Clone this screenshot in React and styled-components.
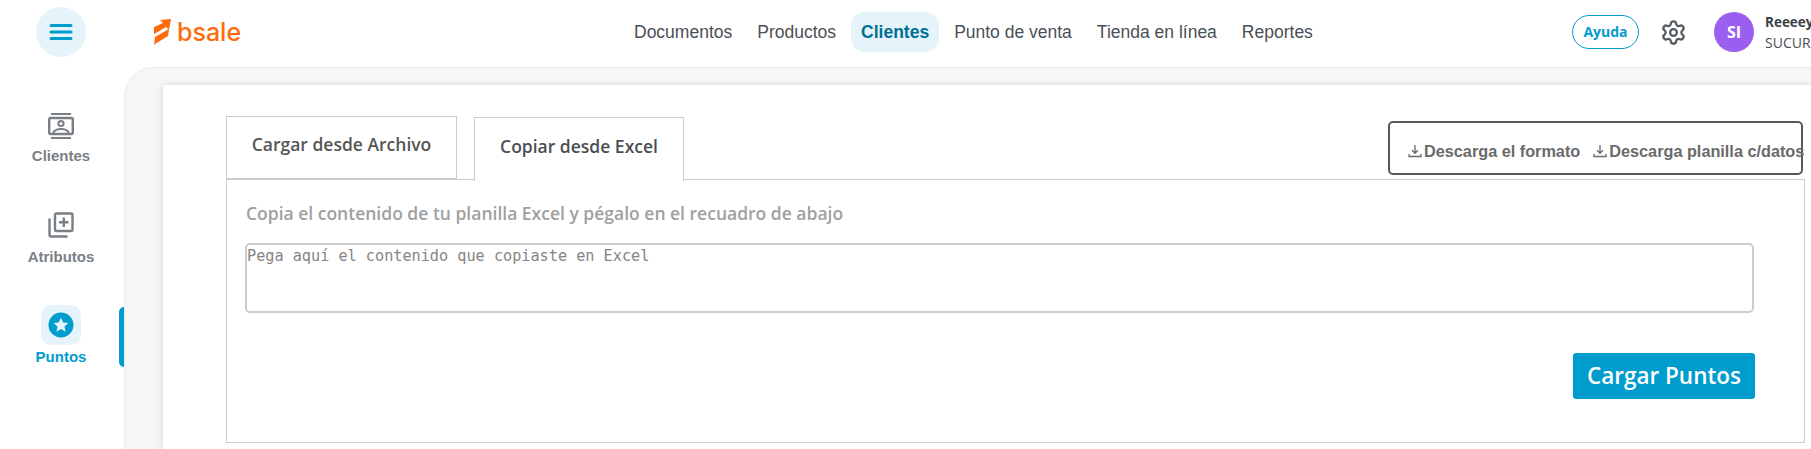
import React from 'react';
import styled, { createGlobalStyle } from 'styled-components';
import { Settings } from 'lucide-react';

const Global = createGlobalStyle`
  html, body { margin: 0; padding: 0; background: #fff; height: 100%; overflow: hidden; }
  * { box-sizing: border-box; }
`;
const Page = styled.div`width: 1811px; height: 449px; overflow: hidden; display: flex; flex-direction: column; background: #fff;`;
const Header = styled.header`height: 67px; flex: none; display: flex; align-items: center; background: #fff;`;
const Brand = styled.div`width: 624px; flex: none; display: flex; align-items: center; padding-left: 36px;`;
const MenuButton = styled.button`width: 50px; height: 50px; border: 0; padding: 0; border-radius: 50%; background: #e5f4fa; display: flex; align-items: center; justify-content: center; margin-top: -3px;`;
const Logo = styled.div`display: flex; align-items: center; margin-left: 67px; margin-top: -3px; gap: 4px;`;
const LogoText = styled.span`font: 500 25px/1 "Inter", sans-serif; color: #ff6b0a; letter-spacing: 0;`;
const Nav = styled.nav`display: flex; gap: 5px; margin-top: -3px;`;
const NavItem = styled.a`height: 40px; padding: 1px 10px 0; display: flex; align-items: center; border-radius: 14px; font: ${p => p.$active ? 700 : 400} 17.5px/1 "Liberation Sans", sans-serif; color: ${p => p.$active ? '#006f94' : '#4a4f55'}; background: ${p => p.$active ? '#e5f4fa' : 'transparent'};`;
const UserArea = styled.div`margin-left: auto; width: 239px; flex: none; display: flex; align-items: center; overflow: hidden; margin-top: -3px;`;
const HelpPill = styled.button`width: 67px; height: 34px; flex: none; padding: 0; background: #fff; border: 1px solid #009ccd; border-radius: 17px; color: #009ccd; font: 700 14px/1 "Open Sans", sans-serif;`;
const GearSlot = styled.div`display: flex; flex: none; margin-left: 21px; color: #565b60;`;
const Avatar = styled.div`width: 40px; height: 40px; flex: none; margin-left: 27px; border-radius: 50%; background: #9b5ff0; color: #fff; display: flex; align-items: center; justify-content: center; font: 700 16px/1 "Open Sans", sans-serif;`;
const UserText = styled.div`margin-left: 11px; flex: none; display: flex; flex-direction: column; gap: 3px; white-space: nowrap;`;
const UserName = styled.span`font: 700 13.5px/17px "Open Sans", sans-serif; color: #3a3f45;`;
const UserBranch = styled.span`font: 400 14px/17px "Open Sans", sans-serif; color: #4a4f55;`;

const Body = styled.div`flex: 1; display: flex; min-height: 0;`;
const Sidebar = styled.aside`width: 124px; flex: none; display: flex; flex-direction: column; padding-top: 45px; position: relative;`;
const SideItem = styled.div`height: ${p => p.$h}px; display: flex; flex-direction: column; align-items: center; gap: ${p => p.$gap}px; color: ${p => p.$active ? '#009ccd' : '#7a7f85'}; font: 700 15px/18px "Liberation Sans", sans-serif; width: 122px;`;
const IconTile = styled.div`width: 40px; height: 40px; border-radius: 10px; background: #e5f4fa; display: flex; align-items: center; justify-content: center;`;
const Indicator = styled.div`position: absolute; left: 119px; top: 240px; width: 5px; height: 60px; background: #009ccd; border-radius: 5px 0 0 5px;`;
const Shell = styled.main`flex: 1; min-width: 0; background: #f4f6f8; border-top: 1px solid #e8eaed; border-left: 1px solid #e8eaed; border-top-left-radius: 30px; padding: 17px 0 0 38px;`;
const Card = styled.section`height: 100%; background: #fff; box-shadow: 0 0 6px rgba(0,0,0,.14); padding: 31px 6px 0 63px;`;
const TabRow = styled.div`display: flex; align-items: flex-end; justify-content: space-between; padding-right: 2px;`;
const Tabs = styled.div`display: flex; gap: 17px; align-items: flex-start;`;
const Tab = styled.div`height: ${p => p.$active ? 64 : 63}px; width: ${p => p.$w}px; margin-top: ${p => p.$active ? 1 : 0}px; margin-bottom: ${p => p.$active ? -1 : 0}px; padding-bottom: 6px; position: relative; display: flex; align-items: center; justify-content: center; border: 1px solid #cccccc; border-bottom: ${p => p.$active ? '0' : '1px solid #ccc'}; background: #fff; font: 600 17.5px/1 "Open Sans", sans-serif; color: ${p => p.$active ? '#4a4f55' : '#555'}; z-index: 1;`;
const DownloadBox = styled.div`width: 415px; height: 54px; margin-bottom: 5px; padding: 18px 0 0 17px; border: 2px solid #55585c; border-radius: 5px; display: flex; gap: 12px; white-space: nowrap;`;
const DownloadLink = styled.a`display: flex; align-items: center; height: 20px; gap: 1px; color: #6a6a6a; font: 700 16.25px/1 "Liberation Sans", sans-serif;`;
const Panel = styled.div`height: 264px; margin-top: -1px; border: 1px solid #ccc; padding: 22px 50px 0 18px;`;
const Hint = styled.p`margin: 0 0 0 1px; font: 600 17.5px/22px "Open Sans", sans-serif; color: #a0a0a0;`;
const Paste = styled.textarea`display: block; width: 100%; height: 70px; margin-top: 19px; padding: 2px 0; border: 2px solid #ccc; border-radius: 5px; resize: none; outline: 0; font: 400 15.2px/18px "DejaVu Sans Mono", monospace; &::placeholder { color: #858585; opacity: 1; }`;
const Actions = styled.div`display: flex; justify-content: flex-end; margin-right: -1px; margin-top: 40px;`;
const Submit = styled.button`width: 182px; height: 46px; border: 0; padding: 0; background: #009ccd; border-radius: 3px; color: #fff; font: 600 22.5px/1 "Open Sans", sans-serif;`;

const DownloadIcon = () => (
  <svg width="16" height="16" viewBox="0 0 16 16" fill="none" stroke="#6a6a6a" strokeWidth="1.3">
    <path d="M8 2v8M5 7.3l3 3 3-3M2 11v2.5h12V11" />
  </svg>
);

export default function App() {
  return (
    <Page>
      <Global />
      <Header>
        <Brand>
          <MenuButton aria-label="Menú">
            <svg width="24" height="18" viewBox="0 0 24 18" stroke="#009ccd" strokeWidth="3" strokeLinecap="round">
              <path d="M2 2.5h20M2 9h20M2 15.500h20" />
            </svg>
          </MenuButton>
          <Logo>
            <svg width="20" height="28" viewBox="0 0 20 28" fill="#ff6b0a">
              <path d="M10 5 L7 2 L18 1 L16 12 L13 9 L3 15 L1 16 L1 9 Z" />
              <path d="M1 27 L2 19 L16 11 L15 18 L2 26 Z" />
            </svg>
            <LogoText>bsale</LogoText>
          </Logo>
        </Brand>
        <Nav>
          <NavItem>Documentos</NavItem>
          <NavItem>Productos</NavItem>
          <NavItem $active>Clientes</NavItem>
          <NavItem>Punto de venta</NavItem>
          <NavItem>Tienda en línea</NavItem>
          <NavItem>Reportes</NavItem>
        </Nav>
        <UserArea>
          <HelpPill>Ayuda</HelpPill>
          <GearSlot><Settings size={27} strokeWidth={2} /></GearSlot>
          <Avatar>SI</Avatar>
          <UserText>
            <UserName>Reeeeyes Ignacio</UserName>
            <UserBranch>SUCURSAL CENTRAL</UserBranch>
          </UserText>
        </UserArea>
      </Header>
      <Body>
        <Sidebar>
          <SideItem $h={100} $gap={7}>
            <svg width="28" height="28" viewBox="0 0 28 28" fill="none" stroke="#7a7f85" strokeWidth="2.400">
              <path d="M4 2h20M4 26h20" strokeWidth="2.200" />
              <rect x="2.200" y="6" width="23.600" height="16" rx="1.500" />
              <circle cx="14" cy="11.500" r="2.600" strokeWidth="2" />
              <path d="M6 21c1.500-3 5-4 8-4s6.500 1 8 4" strokeWidth="2" />
            </svg>
            Clientes
          </SideItem>
          <SideItem $h={93} $gap={10}>
            <svg width="26" height="26" viewBox="0 0 26 26" fill="none" stroke="#7a7f85" strokeWidth="2.400">
              <rect x="7" y="1.500" width="17.500" height="17.500" rx="1.500" />
              <path d="M15.800 5.500v9.500M11 10.200h9.500" />
              <path d="M1.500 6.500v16a2 2 0 0 0 2 2h16" />
            </svg>
            Atributos
          </SideItem>
          <SideItem $h={70} $gap={3} $active>
            <IconTile>
              <svg width="26" height="26" viewBox="0 0 26 26">
                <circle cx="13" cy="13" r="12.500" fill="#009ccd" />
                <path d="M13 5.800l2.200 4.700 5.100.6-3.800 3.500 1 5.100-4.500-2.600-4.500 2.600 1-5.100-3.800-3.500 5.100-.6z" fill="#e5f4fa" />
              </svg>
            </IconTile>
            Puntos
          </SideItem>
          <Indicator />
        </Sidebar>
        <Shell>
          <Card>
            <TabRow>
              <Tabs>
                <Tab $w={231}>Cargar desde Archivo</Tab>
                <Tab $w={210} $active>Copiar desde Excel</Tab>
              </Tabs>
              <DownloadBox>
                <DownloadLink><DownloadIcon />Descarga el formato</DownloadLink>
                <DownloadLink><DownloadIcon />Descarga planilla c/datos</DownloadLink>
              </DownloadBox>
            </TabRow>
            <Panel>
              <Hint>Copia el contenido de tu planilla Excel y pégalo en el recuadro de abajo</Hint>
              <Paste placeholder="Pega aquí el contenido que copiaste en Excel" />
              <Actions><Submit>Cargar Puntos</Submit></Actions>
            </Panel>
          </Card>
        </Shell>
      </Body>
    </Page>
  );
}
